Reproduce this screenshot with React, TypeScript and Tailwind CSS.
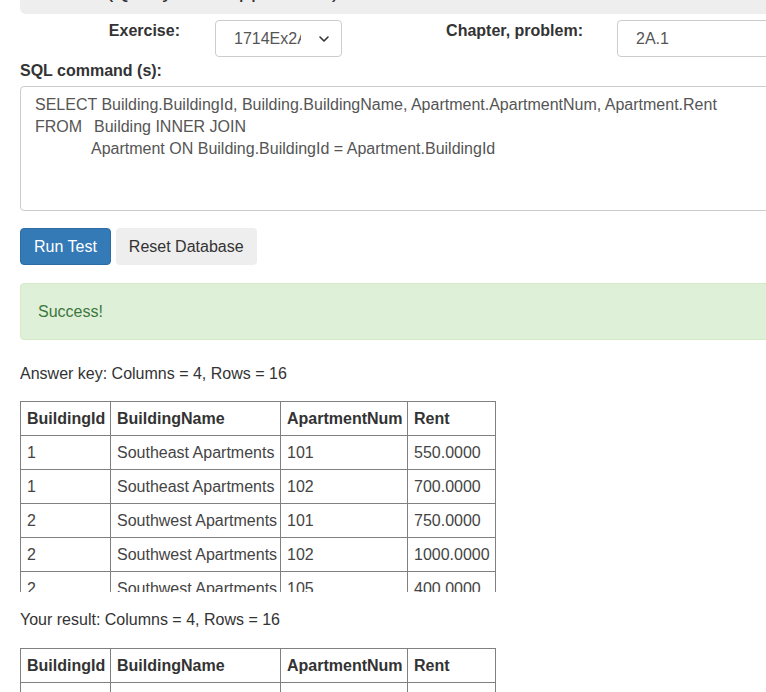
import { ChevronDown } from "lucide-react";

const rows = [
  ["1", "Southeast Apartments", "101", "550.0000"],
  ["1", "Southeast Apartments", "102", "700.0000"],
  ["2", "Southwest Apartments", "101", "750.0000"],
  ["2", "Southwest Apartments", "102", "1000.0000"],
  ["2", "Southwest Apartments", "105", "400.0000"],
];

const ResultTable = ({ data }: { data: string[][] }) => {
  return (
    <table className="table-fixed w-[475px] border-collapse text-[16px] leading-[22px] text-[#333]">
      <colgroup>
        <col className="w-[90px]" />
        <col className="w-[170px]" />
        <col className="w-[127px]" />
        <col className="w-[88px]" />
      </colgroup>
      <thead>
        <tr>
          {["BuildingId", "BuildingName", "ApartmentNum", "Rent"].map((h) => (
            <th key={h} className="border border-[#808080] px-[6px] pt-[6px] pb-[5px] text-left font-bold whitespace-nowrap">
              {h}
            </th>
          ))}
        </tr>
      </thead>
      <tbody>
        {data.map((r, i) => (
          <tr key={i}>
            {r.map((c, j) => (
              <td key={j} className="border border-[#808080] px-[6px] pt-[6px] pb-[5px] whitespace-nowrap text-[#444]">
                {c}
              </td>
            ))}
          </tr>
        ))}
      </tbody>
    </table>
  );
};

const App = () => {
  return (
    <div className="w-[766px] h-[692px] overflow-hidden bg-white font-['Liberation_Sans',Arial,sans-serif] text-[16px] text-[#333]">
      <div className="w-[900px] pl-[20px]">
        <div className="h-[14px] overflow-hidden bg-[#eeeeee] rounded-bl-[6px]">
          <div className="-mt-[23px] pl-[86px] text-[22px] leading-[26px] text-[#333] whitespace-nowrap">
            (Query Test Application)
          </div>
        </div>

        <div className="flex items-start mt-[6px]">
          <div className="w-[160px] text-right font-bold leading-[22px]">Exercise:</div>
          <div className="ml-[35px] w-[127px] h-[37px] border border-[#ccc] rounded-[4px] flex items-center pl-[18px] pr-[9px] text-[#555]">
            <span className="w-[67px] overflow-hidden whitespace-nowrap">1714Ex2A</span>
            <ChevronDown className="ml-auto text-[#333]" size={16} strokeWidth={2.4} />
          </div>
          <div className="w-[241px] text-right font-bold leading-[22px]">Chapter, problem:</div>
          <div className="ml-[34px] w-[220px] h-[37px] border border-[#ccc] rounded-[4px] flex items-center pl-[18px] text-[#555]">
            2A.1
          </div>
        </div>

        <div className="mt-[3px] font-bold leading-[22px]">SQL command (s):</div>

        <div className="mt-[4px] h-[125px] border border-[#ccc] rounded-[4px] pl-[14px] pt-[7px] leading-[22px] text-[#555]">
          <div>SELECT Building.BuildingId, Building.BuildingName, Apartment.ApartmentNum, Apartment.Rent</div>
          <div className="flex">
            <span className="w-[59px]">FROM</span>
            <span>Building INNER JOIN</span>
          </div>
          <div className="pl-[56px]">Apartment ON Building.BuildingId = Apartment.BuildingId</div>
        </div>

        <div className="flex gap-[5px] mt-[17px]">
          <button className="h-[37px] px-[13px] bg-[#337ab7] border border-[#2e6da4] rounded-[4px] text-white">
            Run Test
          </button>
          <button className="h-[37px] px-[13px] bg-[#eeeeee] rounded-[4px] text-[#333]">
            Reset Database
          </button>
        </div>

        <div className="mt-[18px] h-[57px] bg-[#dff0d8] border border-[#d6e9c6] rounded-[4px] flex items-center pl-[17px] text-[#3c763d]">
          Success!
        </div>

        <div className="mt-[23px] leading-[22px]">Answer key: Columns = 4, Rows = 16</div>

        <div className="mt-[16px] h-[191px] overflow-hidden">
          <ResultTable data={rows} />
        </div>

        <div className="mt-[17px] leading-[22px]">Your result: Columns = 4, Rows = 16</div>

        <div className="mt-[17px] h-[60px] overflow-hidden">
          <ResultTable data={rows.slice(0, 1)} />
        </div>
      </div>
    </div>
  );
};

export default App;
